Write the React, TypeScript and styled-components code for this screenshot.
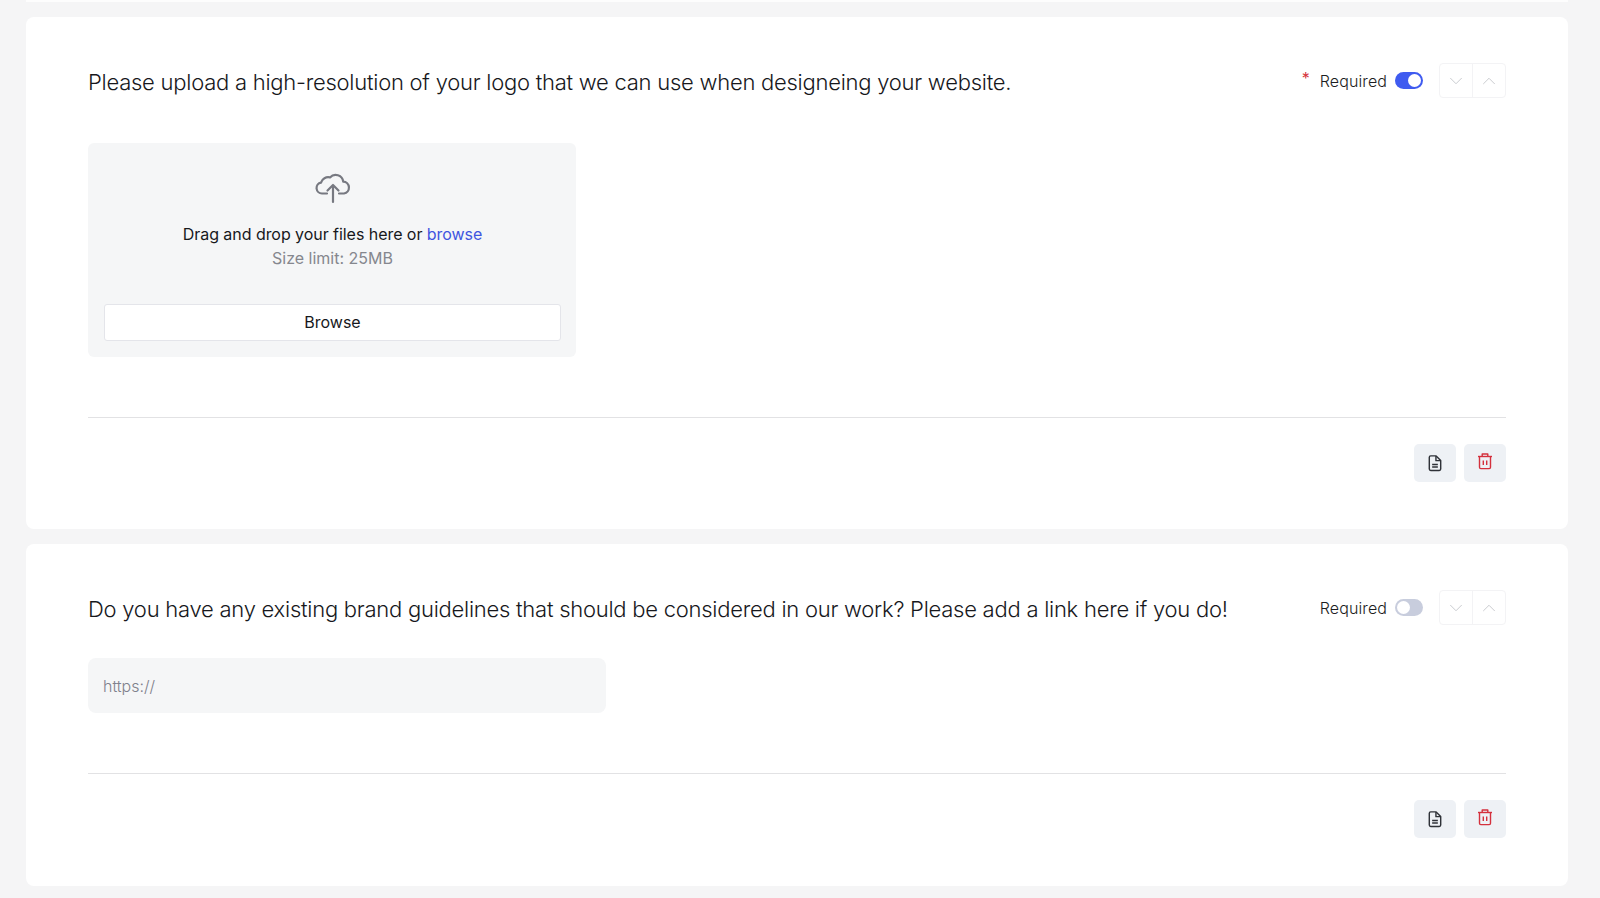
import React from "react";
import styled, { createGlobalStyle } from "styled-components";
import { ChevronDown, ChevronUp } from "lucide-react";

const GlobalStyle = createGlobalStyle`
    html, body {
        margin: 0;
        padding: 0;
        background: #f5f5f6;
        font-family: "Inter", "Liberation Sans", sans-serif;
    }
`;

const Page = styled.div`
    width: 1600px;
    height: 898px;
    overflow: hidden;
    box-sizing: border-box;
    padding: 0 32px 0 26px;
    display: flex;
    flex-direction: column;
    gap: 15px;
`;

const Sliver = styled.div`
    height: 2px;
    background: #fdfdfd;
`;

const Card = styled.section`
    background: #fff;
    border-radius: 8px;
    padding: 46px 62px 47px 62px;
    flex-shrink: 0;
    &:last-child {
        padding-bottom: 48px;
    }
`;

const Header = styled.div`
    display: flex;
    align-items: center;
    justify-content: space-between;
    height: 35px;
`;

const Question = styled.h2`
    margin: 0;
    font-size: 22px;
    font-weight: 300;
    color: #17181c;
    letter-spacing: -0.25px;
    white-space: nowrap;
    position: relative;
    top: 1px;
`;

const Controls = styled.div`
    display: flex;
    align-items: center;
`;

const Star = styled.span`
    color: #d6343c;
    font-size: 16px;
    margin-right: 10px;
    position: relative;
    top: -3px;
`;

const RequiredLabel = styled.span`
    font-size: 16px;
    font-weight: 300;
    letter-spacing: 0.1px;
    color: #1c1d22;
    margin-right: 8px;
`;

const Toggle = styled.div<{ $on?: boolean }>`
    width: 28px;
    height: 17px;
    box-sizing: border-box;
    border-radius: 9px;
    background: ${(p) => (p.$on ? "#3f5bf0" : "#c8cddd")};
    display: flex;
    align-items: center;
    justify-content: ${(p) => (p.$on ? "flex-end" : "flex-start")};
    padding: 2px;
    margin-right: 16px;
`;

const Knob = styled.div`
    width: 13px;
    height: 13px;
    border-radius: 50%;
    background: #fff;
`;

const Arrows = styled.div`
    display: flex;
    width: 67px;
    height: 35px;
    box-sizing: border-box;
    border: 1px solid #f3f3f5;
    border-radius: 4px;
`;

const ArrowButton = styled.button`
    flex: 1;
    border: none;
    background: none;
    padding: 0;
    display: flex;
    align-items: center;
    justify-content: center;
    color: #c5c7cc;
    &:first-child {
        border-right: 1px solid #f3f3f5;
    }
`;

const DropZone = styled.div`
    margin-top: 45px;
    width: 488px;
    height: 214px;
    box-sizing: border-box;
    border-radius: 6px;
    background: #f5f6f7;
    padding: 29px 15px 16px 16px;
    display: flex;
    flex-direction: column;
    align-items: center;
`;

const DropText = styled.div`
    margin-top: 18px;
    font-size: 16px;
    line-height: 24px;
    letter-spacing: -0.05px;
    color: #17181c;
    font-weight: 400;
`;

const BrowseLink = styled.a`
    color: #3f55e0;
`;

const SizeLimit = styled.div`
    font-size: 16px;
    line-height: 24px;
    color: #85878e;
`;

const BrowseButton = styled.button`
    margin-top: auto;
    width: 100%;
    height: 37px;
    padding: 0 0 2px;
    background: #fff;
    border: 1px solid #e4e5ea;
    border-radius: 3px;
    font-family: inherit;
    font-size: 16px;
    color: #17181c;
`;

const UrlInput = styled.input`
    display: block;
    margin-top: 33px;
    width: 518px;
    height: 55px;
    box-sizing: border-box;
    border: none;
    border-radius: 8px;
    background: #f5f6f7;
    padding: 0 15px;
    font-family: inherit;
    font-size: 16px;
    font-weight: 300;
    &::placeholder {
        color: #7f818c;
        opacity: 1;
    }
`;

const Divider = styled.hr`
    margin: 60px 0 0;
    border: none;
    height: 1px;
    background: #e2e2e4;
`;

const Footer = styled.div`
    margin-top: 26px;
    display: flex;
    justify-content: flex-end;
    gap: 8px;
`;

const ActionButton = styled.button<{ $danger?: boolean }>`
    width: 42px;
    height: 38px;
    border: none;
    padding: 0;
    border-radius: 5px;
    background: #eef1f5;
    color: ${(p) => (p.$danger ? "#d4313d" : "#2f3238")};
    display: flex;
    align-items: center;
    justify-content: center;
`;

const CloudIcon = () => (
    <svg width="36" height="32" viewBox="0 0 36 32" fill="none" stroke="#777981" strokeWidth="2.2" strokeLinecap="round" strokeLinejoin="round">
        <path d="M12 21.5H7A5.500 5.500 0 0 1 6 10.600 7.500 7.500 0 0 1 15 5.400 7.600 7.600 0 0 1 28.200 9.600 6 6 0 0 1 29 21.500H24" />
        <path d="M18 30V13M12.500 18.500 18 13l5.500 5.500" />
    </svg>
);

const DocIcon = () => (
    <svg width="16" height="19" viewBox="0 0 16 20" fill="none" stroke="currentColor" strokeWidth="1.5" strokeLinejoin="round">
        <path d="M3.500 2h5.700L14 6.800v9a1.500 1.500 0 0 1-1.500 1.500h-9A1.500 1.500 0 0 1 2 15.800V3.500A1.500 1.500 0 0 1 3.500 2z" />
        <path d="M9 2v5h5" />
        <path d="M5 11h6M5 13.700h6" />
    </svg>
);

const TrashIcon = () => (
    <svg width="16" height="21" viewBox="0 0 16 21" fill="none" stroke="currentColor" strokeWidth="1.4" strokeLinejoin="round">
        <path d="M1 3.500h14" />
        <path d="M5.200 3.500V1h5.600v2.500" />
        <path d="M2.500 3.500v10.800c0 .8.600 1.300 1.300 1.300h8.400c.8 0 1.300-.5 1.300-1.300V3.500" />
        <path d="M6.300 7.500v4.500M9.700 7.500v4.500" />
    </svg>
);

const QuestionHeader: React.FC<{ text: string; required?: boolean }> = ({ text, required }) => (
    <Header>
        <Question>{text}</Question>
        <Controls>
            {required && <Star>*</Star>}
            <RequiredLabel>Required</RequiredLabel>
            <Toggle $on={required}>
                <Knob />
            </Toggle>
            <Arrows>
                <ArrowButton>
                    <ChevronDown size={22} strokeWidth={1} />
                </ArrowButton>
                <ArrowButton>
                    <ChevronUp size={22} strokeWidth={1} />
                </ArrowButton>
            </Arrows>
        </Controls>
    </Header>
);

const CardFooter = () => (
    <>
        <Divider />
        <Footer>
            <ActionButton>
                <DocIcon />
            </ActionButton>
            <ActionButton $danger>
                <TrashIcon />
            </ActionButton>
        </Footer>
    </>
);

export default function App() {
    return (
        <Page>
            <GlobalStyle />
            <Sliver />
            <Card>
                <QuestionHeader
                    required
                    text="Please upload a high-resolution of your logo that we can use when designeing your website."
                />
                <DropZone>
                    <CloudIcon />
                    <DropText>
                        Drag and drop your files here or <BrowseLink>browse</BrowseLink>
                    </DropText>
                    <SizeLimit>Size limit: 25MB</SizeLimit>
                    <BrowseButton>Browse</BrowseButton>
                </DropZone>
                <CardFooter />
            </Card>
            <Card>
                <QuestionHeader text="Do you have any existing brand guidelines that should be considered in our work? Please add a link here if you do!" />
                <UrlInput placeholder="https://" />
                <CardFooter />
            </Card>
        </Page>
    );
}
